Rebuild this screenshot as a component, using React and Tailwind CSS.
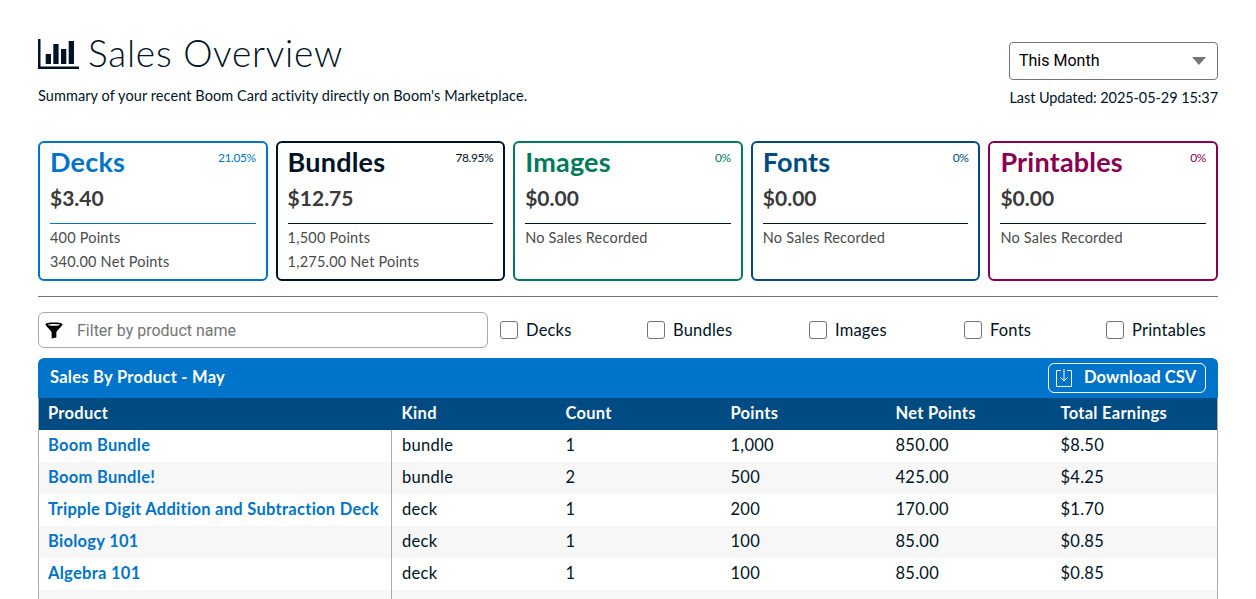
import React from "react";

const cards = [
	{ name: "Decks", pct: "21.05%", money: "$3.40", lines: ["400 Points", "340.00 Net Points"], border: "border-[#0074c8]", text: "text-[#0074c8]", rule: "border-[#0074c8]" },
	{ name: "Bundles", pct: "78.95%", money: "$12.75", lines: ["1,500 Points", "1,275.00 Net Points"], border: "border-[#001324]", text: "text-[#001324]", rule: "border-[#001324]" },
	{ name: "Images", pct: "0%", money: "$0.00", lines: ["No Sales Recorded"], border: "border-[#007a5a]", text: "text-[#007a5a]", rule: "border-[#001324]" },
	{ name: "Fonts", pct: "0%", money: "$0.00", lines: ["No Sales Recorded"], border: "border-[#004c82]", text: "text-[#004c82]", rule: "border-[#001324]" },
	{ name: "Printables", pct: "0%", money: "$0.00", lines: ["No Sales Recorded"], border: "border-[#8a0050]", text: "text-[#8a0050]", rule: "border-[#001324]" },
];

const rows = [
	["Boom Bundle", "bundle", "1", "1,000", "850.00", "$8.50"],
	["Boom Bundle!", "bundle", "2", "500", "425.00", "$4.25"],
	["Tripple Digit Addition and Subtraction Deck", "deck", "1", "200", "170.00", "$1.70"],
	["Biology 101", "deck", "1", "100", "85.00", "$0.85"],
	["Algebra 101", "deck", "1", "100", "85.00", "$0.85"],
];

const filters = [
	{ label: "Decks", width: "w-[147px]" },
	{ label: "Bundles", width: "w-[162px]" },
	{ label: "Images", width: "w-[155px]" },
	{ label: "Fonts", width: "w-[142px]" },
	{ label: "Printables", width: "w-auto" },
];

const headers = ["Product", "Kind", "Count", "Points", "Net Points", "Total Earnings"];

const SummaryCard = ({ card }) => (
	<div className={`h-[140px] rounded-md border-2 px-[10px] ${card.border}`}>
		<div className="flex items-start justify-between">
			<h2 className={`mt-[3px] text-[27px] leading-[32px] font-bold tracking-[0.2px] ${card.text}`}>{card.name}</h2>
			<span className={`mt-[7px] text-[12px] leading-[16px] tracking-[-0.45px] ${card.text}`}>{card.pct}</span>
		</div>
		<p className="mt-[6px] text-[21px] leading-[28px] font-bold text-[#3a3a3a]">{card.money}</p>
		<hr className={`mt-[11px] border-t ${card.rule}`} />
		<div className="mt-[2px] text-[14.5px] leading-[24px] tracking-[0.2px] text-[#4a4a4a]">
			{card.lines.map((line) => (
				<p key={line}>{line}</p>
			))}
		</div>
	</div>
);

const App = () => {
	return (
		<div className="h-[599px] overflow-hidden bg-white px-[38px] text-[#001324] font-['Lato','Open_Sans',sans-serif]">
			<header className="flex justify-between pt-[35px]">
				<div>
					<h1 className="flex items-center text-[37px] leading-[36px] font-light tracking-[0.75px]">
						<svg width="41" height="30" viewBox="0 0 41 30" fill="currentColor" className="mt-[2px] mr-[9px]">
							<path d="M0 0h2.500v27.500H41V30H0z" />
							<rect x="7.700" y="15" width="5.300" height="10" />
							<rect x="15.300" y="5" width="5.300" height="20" />
							<rect x="23" y="10" width="5.300" height="15" />
							<rect x="30.700" y="2" width="5.300" height="23" />
						</svg>
						Sales Overview
					</h1>
					<p className="mt-[15px] text-[14.5px] leading-[20px] tracking-[0.08px]">Summary of your recent Boom Card activity directly on Boom's Marketplace.</p>
				</div>
				<div className="flex flex-col items-end pt-[7px]">
					<div className="flex h-[38px] w-[209px] items-center justify-between rounded border border-[#757575] px-[9px] font-['Roboto',sans-serif] text-[16px] text-black">
						<span>This Month</span>
						<span className="mr-[2px] h-0 w-0 border-x-[7px] border-t-[8px] border-x-transparent border-t-[#757575]" />
					</div>
					<p className="mt-[8px] text-[14.5px] leading-[20px] tracking-[-0.08px]">Last Updated: 2025-05-29 15:37</p>
				</div>
			</header>

			<section className="mt-[33px] grid grid-cols-5 gap-[8px]">
				{cards.map((card) => (
					<SummaryCard key={card.name} card={card} />
				))}
			</section>

			<hr className="mt-[15px] border-t border-[#757575]" />

			<div className="mt-[15px] flex items-center">
				<div className="flex h-[36px] w-[450px] items-center rounded-md border border-[#a9a9a9] pl-[6px]">
					<svg width="18" height="17" viewBox="0 0 18 18" fill="black">
						<path d="M0 2.500C0 1 4 0.500 9 0.500S18 1 18 2.500C18 3.500 16.500 5 11.500 10.500V16.500L6.500 17.500V10.500C1.500 5 0 3.500 0 2.500Z" />
						<ellipse cx="9" cy="3" rx="6.500" ry="1" fill="white" />
					</svg>
					<span className="ml-[14px] pt-[1px] font-['Roboto',sans-serif] text-[16px] text-[#757575]">Filter by product name</span>
				</div>
				<div className="ml-[12px] flex flex-1">
					{filters.map((f) => (
						<label key={f.label} className={`flex items-center gap-[8px] text-[16.5px] tracking-[0.2px] ${f.width}`}>
							<span className="h-[18px] w-[18px] rounded-[3px] border border-[#757575] bg-white" />
							{f.label}
						</label>
					))}
				</div>
			</div>

			<section className="mt-[10px]">
				<div className="flex h-[40px] items-center justify-between rounded-t-md bg-[#0074c8] px-[12px] font-bold text-white">
					<span className="pb-[2px] text-[16.5px] tracking-[0.27px]">Sales By Product - May</span>
					<button className="flex h-[30px] w-[158px] items-center rounded-md border border-white pl-[7px] text-[16.5px] font-bold tracking-[0.13px]">
						<svg width="16" height="18" viewBox="0 0 16 18" fill="none" stroke="white" strokeWidth="1" className="mr-[12px]">
							<path d="M5 1.500H0.500V17.500H15.500V1.500H11" />
							<path d="M8 0V12M4.500 8.500L8 12L11.500 8.500" />
						</svg>
						<span className="pb-[2px]">Download CSV</span>
					</button>
				</div>
				<table className="w-full table-fixed border-x border-[#a9a9a9] text-[16.5px] tracking-[0.28px]">
					<colgroup>
						<col className="w-[353px]" />
						<col className="w-[164px]" />
						<col className="w-[165px]" />
						<col className="w-[165px]" />
						<col className="w-[165px]" />
						<col />
					</colgroup>
					<thead>
						<tr className="h-[32px] bg-[#004c82] text-left text-white">
							{headers.map((h, i) => (
								<th key={h} className={`pb-[2px] font-bold ${i === 0 ? "pl-[9px]" : "pl-[10px]"}`}>{h}</th>
							))}
						</tr>
					</thead>
					<tbody>
						{rows.map((row, r) => (
							<tr key={row[0]} className={`h-[32px] ${r % 2 === 1 ? "bg-[#f7f7f7]" : "bg-white"}`}>
								<td className="border-r border-[#a9a9a9] pb-[2px] pl-[9px] font-bold text-[#0074c8] whitespace-nowrap">{row[0]}</td>
								{row.slice(1).map((cell, i) => (
									<td key={i} className="pb-[2px] pl-[10px]">{cell}</td>
								))}
							</tr>
						))}
						<tr className="h-[32px] bg-[#f7f7f7]">
							<td className="border-r border-[#a9a9a9]">&nbsp;</td>
							<td colSpan={5} />
						</tr>
					</tbody>
				</table>
			</section>
		</div>
	);
};

export default App;
